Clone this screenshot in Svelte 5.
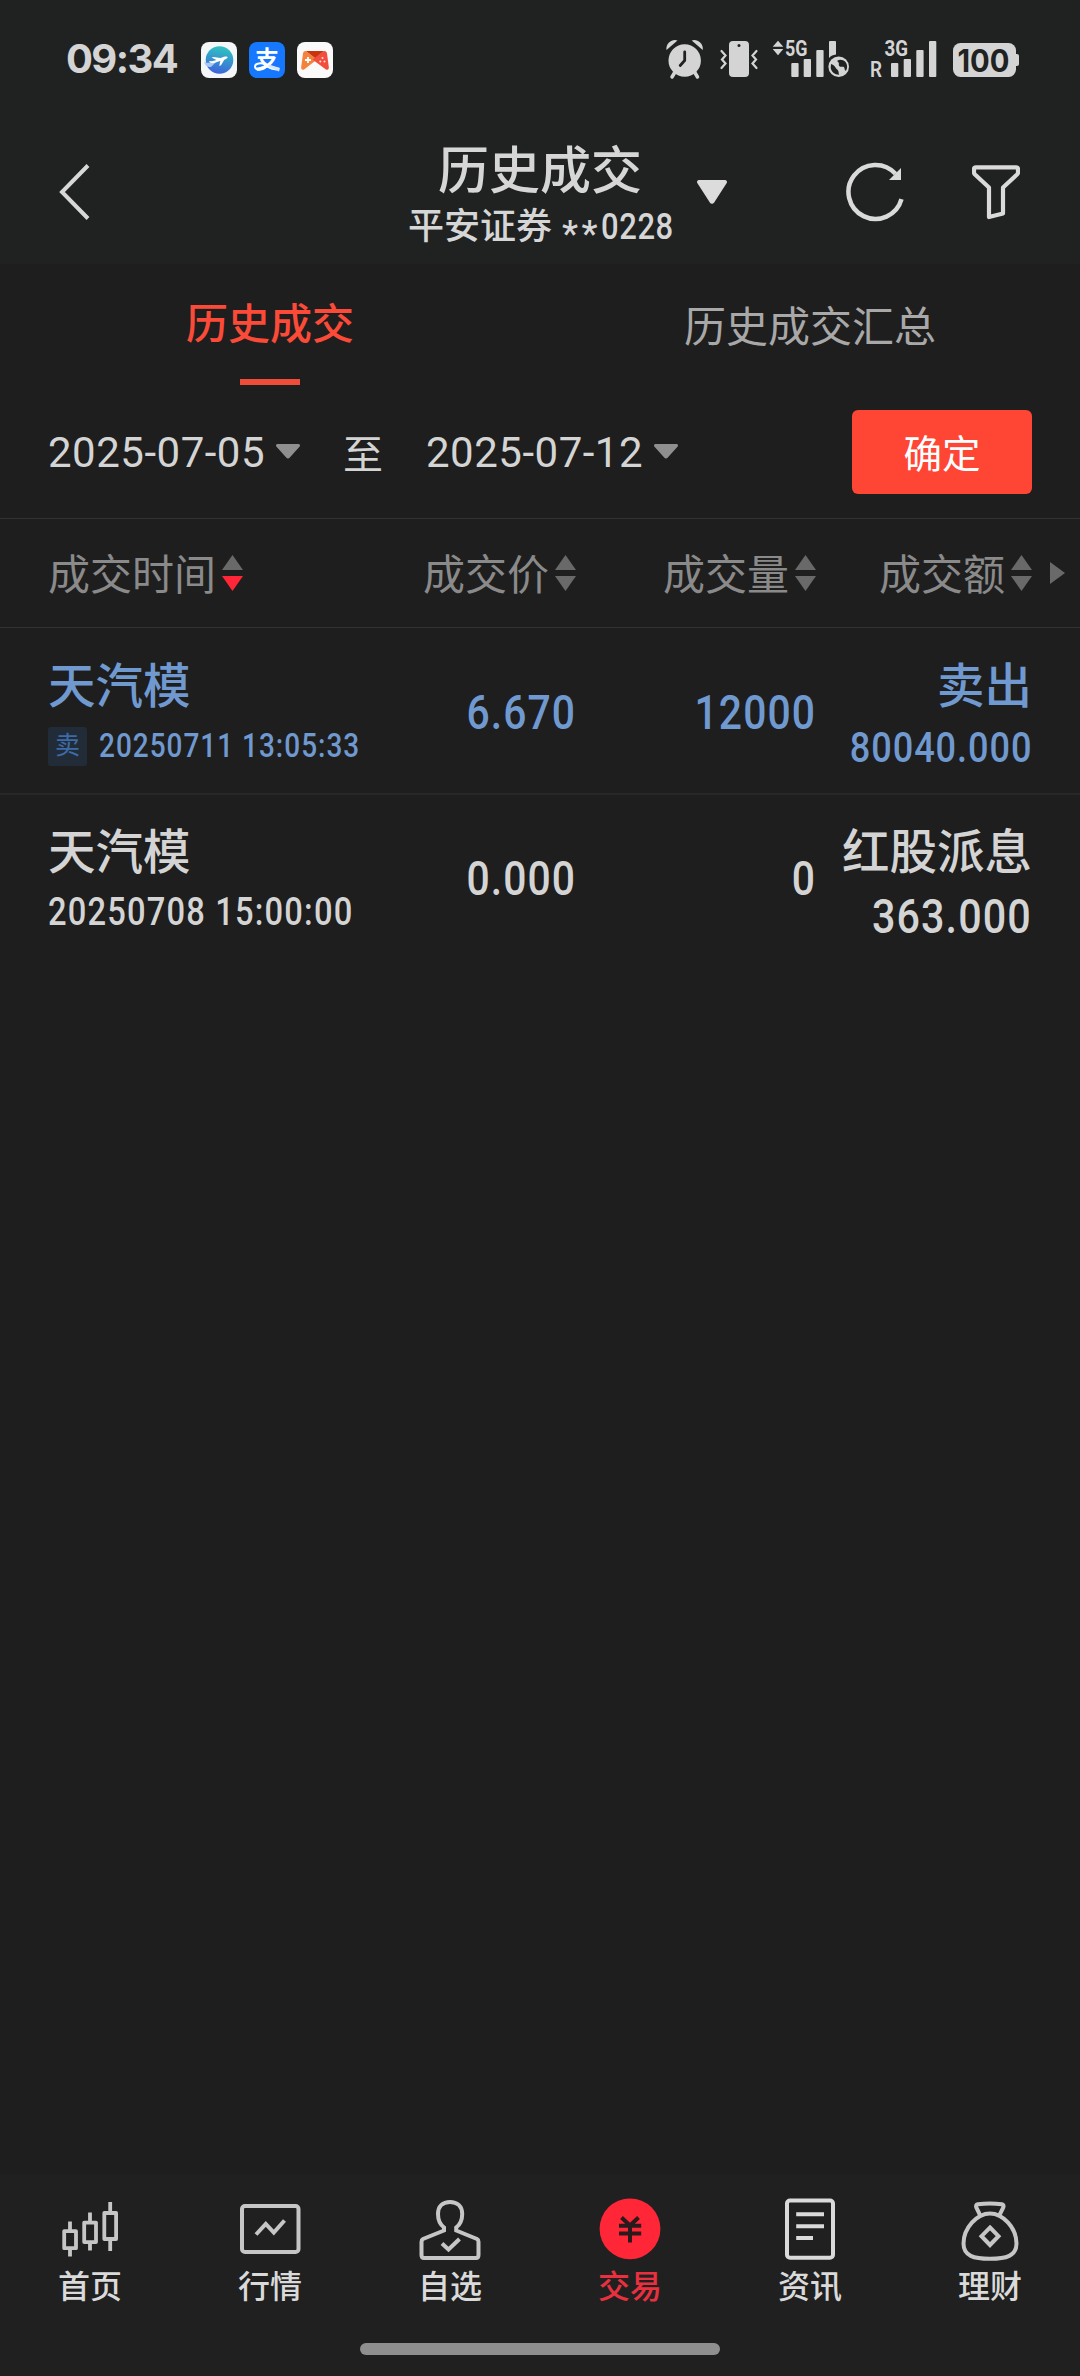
<script lang="ts">
  interface Trade {
    name: string
    time: string
    price: string
    volume: string
    kind: string
    amount: string
    sell: boolean
  }

  type SortDir = 'desc' | null

  const columns: { label: string; sort: SortDir }[] = [
    { label: '成交时间', sort: 'desc' },
    { label: '成交价', sort: null },
    { label: '成交量', sort: null },
    { label: '成交额', sort: null },
  ]

  const trades: Trade[] = [
    {
      name: '天汽模',
      time: '20250711 13:05:33',
      price: '6.670',
      volume: '12000',
      kind: '卖出',
      amount: '80040.000',
      sell: true,
    },
    {
      name: '天汽模',
      time: '20250708 15:00:00',
      price: '0.000',
      volume: '0',
      kind: '红股派息',
      amount: '363.000',
      sell: false,
    },
  ]

  const tabs = ['历史成交', '历史成交汇总']
  const navItems = ['首页', '行情', '自选', '交易', '资讯', '理财']

  let activeTab = $state(0)
  let activeNav = $state(3)
  let startDate = $state('2025-07-05')
  let endDate = $state('2025-07-12')
</script>

<div class="screen">
  <header>
    <div class="status">
      <span class="clock">09:34</span>

      <div class="apps">
        <svg width="36" height="36" viewBox="0 0 36 36">
          <defs>
            <linearGradient id="globe" x1="0.6" y1="0" x2="0.4" y2="1">
              <stop offset="0" stop-color="#2fc5c0" />
              <stop offset="1" stop-color="#3f62dc" />
            </linearGradient>
          </defs>
          <rect width="36" height="36" rx="8" fill="#f4f6f8" />
          <circle cx="18.5" cy="18" r="13.8" fill="url(#globe)" />
          <path d="M3 20c4 2 9 0 14-2l-7 7c-4 0-6-2-7-5z" fill="#a9c8f6" />
          <path d="M8 19l3 .3 4.500-1.400-5-2.300 2-.7 7 1.200 3.500-1.300c2-.7 3.600-.4 3.600.4 0 .8-1.500 1.800-3.300 2.500l-3.300 5.600-1.700.6.900-5-6.200 2.200c-2 .5-4.200-.3-5-2.100z" fill="#fff" />
        </svg>
        <svg class="alipay" width="36" height="36" viewBox="0 0 36 36">
          <rect width="36" height="36" rx="8" fill="#1677ff" />
          <text x="18" y="26" text-anchor="middle">支</text>
          <path d="M16.500 22.500c-4-2-10.500-1.500-10.500 2 0 4.500 8 4.200 12.500-1" fill="none" stroke="#fff" stroke-width="2" />
          <path d="M20 22.500l11 3.500-1 3.500-11-5z" fill="#d5e6ff" />
        </svg>
        <svg width="36" height="36" viewBox="0 0 36 36">
          <rect width="36" height="36" rx="8" fill="#fafafa" />
          <path d="M9 9c-1.800 0-2.800.8-3 2.500L4.200 25c-.3 2.500 1.300 3.500 3.200 2.200L20 17.500z" fill="#f5823c" />
          <path d="M27 9c1.800 0 2.800.8 3 2.500L31.800 25c.3 2.500-1.300 3.500-3.200 2.200L15.500 17.500z" fill="#f24e3e" />
          <path d="M9 9h18l-9 7z" fill="#c9340f" />
          <path d="M11 15v6M8 18h6" stroke="#fff" stroke-width="1.800" />
          <circle cx="25.500" cy="16" r="1" fill="#ffe0d8" />
          <circle cx="23.300" cy="19.500" r="1" fill="#ffe0d8" />
          <circle cx="27.500" cy="19.500" r="1" fill="#ffe0d8" />
        </svg>
      </div>

      <svg class="indicators" width="360" height="44" viewBox="662 37 360 44">
        <!-- alarm -->
        <circle cx="684.700" cy="60.500" r="16.200" />
        <path d="M666.500 50a8.500 8.500 0 0 1 11-9.500zM702.700 50a8.500 8.500 0 0 0-11-9.500z" />
        <path d="M675 72l-3 5M694.500 72l3 5" class="line" stroke-width="3.500" />
        <path d="M684.700 52v8.500l-4.500 5" class="cut" stroke-width="2.800" />

        <!-- vibrate -->
        <rect x="729" y="41" width="20" height="36" rx="4" />
        <circle cx="739" cy="45.500" r="1.500" fill="#202222" />
        <path d="M721.500 51l4 4.500-3.500 4 3.500 4-4 4.500M756.500 51l-4 4.500 3.500 4-3.500 4 4 4.500" class="line" stroke-width="2.200" />

        <!-- first sim -->
        <path d="M772.700 46.800l5.300-6 5.300 6zM772.700 49l5.300 6.300 5.300-6.300z" />
        <text x="785" y="56" textLength="22.500" lengthAdjust="spacingAndGlyphs" font-size="22">5G</text>
        <rect x="791.300" y="63" width="7.300" height="14" rx="1" />
        <rect x="803.700" y="59" width="7.300" height="18" rx="1" />
        <rect x="816.300" y="50" width="7.300" height="27" rx="1" />
        <path d="M829 42a1 1 0 0 1 1-1h5a1 1 0 0 1 1 1v12.500c-3 .4-5 1.400-7 3.500z" />
        <circle cx="838.700" cy="66.700" r="10.300" />
        <path d="M831 64c1.800.5 3.500 1.500 4.500 3.500.5 1.500 2.500 2 3 4 .3 1.200 0 2 .8 3.300-4.500.2-8-3-8.600-7zM837.500 60.500c2-1.500 6-.8 8 1.500s2.200 6 .5 8.700c-1.800-.2-1-2.700-2.200-3.700-1.300-.9-3 .5-4.300-.7-1.300-1-.2-2.500-.8-3.600-.4-.8-1.600-1-1.200-2.200z" fill="#202222" />

        <!-- second sim -->
        <text x="870" y="77" font-size="21.500" textLength="12" lengthAdjust="spacingAndGlyphs" font-weight="600">R</text>
        <text x="884.500" y="56" textLength="23.500" lengthAdjust="spacingAndGlyphs" font-size="22">3G</text>
        <rect x="891" y="63" width="7.300" height="14" rx="1" />
        <rect x="903.700" y="59" width="7.300" height="18" rx="1" />
        <rect x="916.300" y="50" width="7.300" height="27" rx="1" />
        <rect x="929" y="41" width="7.300" height="36" rx="1" />

        <!-- battery -->
        <rect x="953" y="43" width="63" height="34" rx="7.500" />
        <rect x="1013" y="54" width="6" height="12" rx="2" />
        <text x="957.500" y="71.800" class="level" textLength="52" lengthAdjust="spacingAndGlyphs">100</text>
      </svg>
    </div>

    <div class="titlebar">
      <button class="icon-btn" aria-label="返回">
        <svg width="34" height="58" viewBox="0 0 34 58" fill="none" stroke="#d8d8d8" stroke-width="4">
          <path d="M31 2.500L5 29l26 26.500" />
        </svg>
      </button>
      <div class="title">
        <h1>历史成交</h1>
        <p>平安证券 <span class="stars">**</span><span class="account">0228</span></p>
        <svg class="caret" width="30" height="24" viewBox="0 0 30 24">
          <path d="M2 0h26a2 2 0 0 1 1.700 3L17 22.800a2.400 2.400 0 0 1-4 0L.3 3A2 2 0 0 1 2 0z" fill="#dcdcdc" />
        </svg>
      </div>
      <div class="actions">
        <button class="icon-btn" aria-label="刷新">
          <svg width="60" height="60" viewBox="0 0 60 60">
            <path d="M55.500 37.200A27 27 0 1 1 49.500 11.800" fill="none" stroke="#dadada" stroke-width="4.500" />
            <path d="M55 6v12H43z" fill="#dadada" />
          </svg>
        </button>
        <button class="icon-btn" aria-label="筛选">
          <svg width="48" height="56" viewBox="0 0 48 56">
            <path d="M4 3.300h40q2 0 2 2v3.200q0 1-1 2L31 23.500V49.500L17 53V23.500L3 10.500q-1-1-1-2V5.300q0-2 2-2z" fill="none" stroke="#dadada" stroke-width="4.200" stroke-linejoin="round" />
          </svg>
        </button>
      </div>
    </div>
  </header>

  <div class="tabs">
    {#each tabs as tab, i (tab)}
      <button class:active={activeTab === i} onclick={() => (activeTab = i)}>
        <span>{tab}</span>
      </button>
    {/each}
  </div>

  <div class="range">
    <span class="date">{startDate}</span>
    {@render dateCaret()}
    <span class="to">至</span>
    <span class="date">{endDate}</span>
    {@render dateCaret()}
    <button class="confirm">确定</button>
  </div>

  <div class="grid thead">
    {#each columns as col (col.label)}
      <div class="th">
        <span>{col.label}</span>
        <svg width="21" height="36" viewBox="0 0 21 36" fill="#696969">
          <path d="M10.500 0L21 15H0z" />
          <path class:on={col.sort === 'desc'} d="M0 21h21L10.500 36z" />
        </svg>
      </div>
    {/each}
    <svg class="more" width="15" height="22" viewBox="0 0 15 22">
      <path d="M0 0l15 11L0 22z" fill="#696969" />
    </svg>
  </div>

  <main>
    {#each trades as t (t.time)}
      <div class="grid row" class:sell={t.sell}>
        <div class="cell">
          <span class="name">{t.name}</span>
          <div class="when">
            {#if t.sell}<i class="badge">卖</i>{/if}
            <span class="num">{t.time}</span>
          </div>
        </div>
        <span class="num big">{t.price}</span>
        <span class="num big">{t.volume}</span>
        <div class="cell end">
          <span class="name">{t.kind}</span>
          <span class="num amount">{t.amount}</span>
        </div>
      </div>
    {/each}
  </main>

  <footer>
    <nav>
      {#each navItems as item, i (item)}
        <button class:active={activeNav === i} onclick={() => (activeNav = i)}>
          <svg width="66" height="66" viewBox="0 0 66 66" fill="none" stroke="#c6c6c6" stroke-width="4">
            {#if i === 0}
              <g stroke-width="3.800" stroke-linejoin="round">
                <rect x="7.200" y="35.200" width="11.800" height="17" />
                <rect x="27.200" y="26.600" width="11.800" height="19.500" />
                <rect x="47.300" y="17" width="11.800" height="26" />
                <path d="M13 25.500v10M13 52v8.500M33 16.500v10M33 46v8.500M53.200 6v11M53.200 43v12" />
              </g>
            {:else if i === 1}
              <rect x="5" y="10" width="56.500" height="46" rx="3" />
              <path d="M19 38.500l9.800-10.500 8 8.500L47.500 24.500" />
            {:else if i === 2}
              <path d="M27 31.500C22.500 28 21 23 21 18 21 10 26 6 33 6s12.200 4 12.200 12c0 5-1.500 10-6 13.500V34.500L60 43q1.500.8 1.500 3V59q0 3-2.500 3H7q-2.500 0-2.500-3V46q0-2.200 1.500-3L27 34.500z" />
              <path d="M25 47.500l6.500 6L42.500 43" />
            {:else if i === 3}
              <circle cx="33" cy="32.800" r="30.400" fill="#ff2637" stroke="none" />
              <path d="M24.500 21.500l8.500 8 8.500-8M22 29.700h22.200M22 37.500h22.200M33 29.500v17" stroke="#2b1a1c" />
            {:else if i === 4}
              <g stroke="#dadada">
                <rect x="10" y="4.600" width="46" height="57.200" rx="3" />
                <path d="M19.200 18.300H47M19.200 30.300H47M19.200 42H36" />
              </g>
            {:else}
              <path d="M33 17.500C20 17.500 6.500 32 6.500 47.500 6.500 60 17 62.800 33 62.800S59.500 60 59.500 47.500C59.500 32 46 17.500 33 17.500z" />
              <path d="M23.500 20l-4.200-8.500q-1-2.500 1.500-3.200Q33 6.500 44.800 8.300q2.500.7 1.500 3.200L42 20" />
              <path d="M33 31.500l8.500 8.700L33 49l-8.500-8.800z" />
            {/if}
          </svg>
          <span>{item}</span>
        </button>
      {/each}
    </nav>
    <div class="home"></div>
  </footer>
</div>

{#snippet dateCaret()}
  <svg class="date-caret" width="24" height="15" viewBox="0 0 24 15">
    <path d="M1.500 0h21a1.500 1.500 0 0 1 1.200 2.400L13.800 13.600a2.300 2.300 0 0 1-3.600 0L.3 2.400A1.500 1.500 0 0 1 1.500 0z" fill="#8f8f8f" />
  </svg>
{/snippet}

<style>
  :global(body) {
    margin: 0;
    background: #1e1e1e;
  }

  .screen {
    display: flex;
    flex-direction: column;
    width: 1080px;
    height: 2376px;
    background: #1e1e1e;
    color: #d4d4d4;
    font-family: Roboto, 'Noto Sans CJK SC', sans-serif;
    overflow: hidden;
  }

  button {
    padding: 0;
    border: none;
    background: none;
    color: inherit;
    font: inherit;
  }

  svg {
    display: block;
    flex: none;
  }

  header {
    height: 264px;
    background: #202222;
  }

  /* status bar */
  .status {
    display: flex;
    align-items: center;
    box-sizing: border-box;
    height: 120px;
    padding: 0 58px 0 66px;
  }

  .clock {
    width: 135px;
    font-family: Inter, sans-serif;
    font-size: 40px;
    font-weight: 700;
    letter-spacing: -1.600px;
    line-height: 48px;
    margin-top: -3px;
  }

  .apps {
    display: flex;
    gap: 12px;
    flex: 1;
  }

  .alipay {
    overflow: visible;
    font: 700 24px 'Noto Sans CJK SC', sans-serif;
    fill: #fff;
  }

  .indicators {
    fill: #d4d4d4;
    margin-top: -2px;
    font-family: Roboto, sans-serif;
    font-weight: 700;
  }

  .indicators .line {
    fill: none;
    stroke: #d4d4d4;
    stroke-linecap: round;
  }

  .indicators .cut {
    fill: none;
    stroke: #202222;
    stroke-linecap: round;
  }

  .level {
    font-family: Inter, sans-serif;
    font-size: 31px;
    font-weight: 700;
    fill: #202222;
  }

  /* title bar */
  .titlebar {
    display: grid;
    grid-template-columns: 1fr 264px 1fr;
    align-items: center;
    height: 144px;
    padding: 0 60px;
  }

  .titlebar > .icon-btn {
    justify-self: start;
    margin-left: -3px;
  }

  .title {
    position: relative;
    padding-top: 6px;
    text-align: center;
    color: #d6d6d6;
    font-weight: 500;
  }

  h1 {
    margin: 0;
    font-size: 51px;
    font-weight: 500;
    line-height: 64px;
  }

  p {
    display: flex;
    align-items: center;
    height: 46px;
    margin: 0;
    font-size: 36px;
    font-weight: 500;
    line-height: 46px;
    white-space: nowrap;
  }

  .stars {
    margin: 14px 0 0 10px;
    letter-spacing: 3.500px;
  }

  .account {
    letter-spacing: 0.700px;
    transform: scaleX(0.86);
    transform-origin: left;
  }

  .caret {
    position: absolute;
    right: -55px;
    top: 46px;
  }

  .actions {
    display: flex;
    align-items: center;
    justify-content: flex-end;
    gap: 66px;
  }

  /* tabs */
  .tabs {
    display: grid;
    grid-template-columns: 1fr 1fr;
    height: 121px;
    font-size: 42px;
    line-height: 60px;
    color: #a8a8a8;
  }

  .tabs button {
    display: flex;
    flex-direction: column;
    align-items: center;
    padding-top: 34px;
  }

  .tabs .active {
    padding-top: 31px;
    color: #fb4b38;
    font-weight: 500;
  }

  .tabs .active::after {
    content: '';
    width: 60px;
    height: 6px;
    margin-top: 24px;
    background: #f04c3a;
  }

  /* date range */
  .range {
    display: flex;
    align-items: center;
    box-sizing: border-box;
    height: 134px;
    padding: 0 48px;
    border-bottom: 1px solid #333;
  }

  .date {
    width: 217px;
    padding-top: 2px;
    font-size: 42px;
    letter-spacing: 0.5px;
    white-space: nowrap;
  }

  .date-caret {
    margin: -1px 0 0 11px;
  }

  .to {
    width: 40px;
    margin: 0 43px;
    font-size: 40px;
  }

  .confirm {
    width: 180px;
    height: 84px;
    margin-left: auto;
    padding-bottom: 2px;
    border-radius: 6px;
    background: #ff4533;
    color: #fff;
    font-size: 38.500px;
  }

  /* table */
  .grid {
    display: grid;
    grid-template-columns: 288px 240px 240px 216px;
    box-sizing: border-box;
    padding: 0 48px;
  }

  .thead {
    position: relative;
    align-items: center;
    height: 109px;
    margin-bottom: 1px;
    border-bottom: 1px solid #323232;
    color: #8a8a8a;
    font-size: 42px;
  }

  .th {
    display: flex;
    align-items: center;
    justify-content: flex-end;
    gap: 6px;
    white-space: nowrap;
  }

  .th span {
    padding-bottom: 4px;
  }

  .th:first-child {
    justify-content: flex-start;
  }

  .on {
    fill: #ff2637;
  }

  .more {
    position: absolute;
    right: 15px;
    top: 43px;
  }

  .row {
    height: 166px;
    align-items: center;
    border-bottom: 2px solid #272727;
  }

  .row:last-child {
    border-bottom-color: transparent;
  }

  .sell {
    color: #7099d0;
  }

  .cell {
    display: flex;
    flex-direction: column;
    padding-top: 10px;
  }

  .end {
    align-items: flex-end;
  }

  .name {
    font-size: 47.500px;
    font-weight: 500;
    line-height: 60px;
    white-space: nowrap;
  }

  .when {
    display: flex;
    align-items: center;
    gap: 12px;
    height: 58px;
    font-size: 38px;
  }

  .sell .when {
    font-size: 32.500px;
  }

  /* narrow figures */
  .num {
    font-weight: 500;
    letter-spacing: 0.026em;
    white-space: nowrap;
    transform: scaleX(0.86);
    transform-origin: left;
  }

  .when .num {
    letter-spacing: 0.036em;
  }

  .big,
  .amount {
    text-align: right;
    transform-origin: right;
  }

  .big {
    font-size: 47.500px;
    padding-top: 4px;
  }

  .amount {
    height: 58px;
    font-size: 48px;
    line-height: 68px;
  }

  .sell .amount {
    font-size: 42px;
    line-height: 62px;
  }

  .badge {
    flex: none;
    width: 39px;
    height: 39px;
    border-radius: 3px;
    background: #222c39;
    color: #3c6ba5;
    font-size: 25px;
    font-style: normal;
    line-height: 37px;
    text-align: center;
  }

  /* bottom bar */
  footer {
    display: flex;
    flex-direction: column;
    align-items: center;
    box-sizing: border-box;
    height: 202px;
    margin-top: auto;
    padding-top: 22px;
    background: #202020;
  }

  nav {
    display: grid;
    grid-template-columns: repeat(6, 180px);
    height: 147px;
  }

  nav button {
    display: flex;
    flex-direction: column;
    align-items: center;
    color: #dadada;
    font-size: 32px;
    font-weight: 500;
    line-height: 50px;
  }

  nav .active {
    color: #e8303f;
  }

  .home {
    width: 360px;
    height: 12px;
    border-radius: 6px;
    background: #8f8f8f;
  }
</style>
